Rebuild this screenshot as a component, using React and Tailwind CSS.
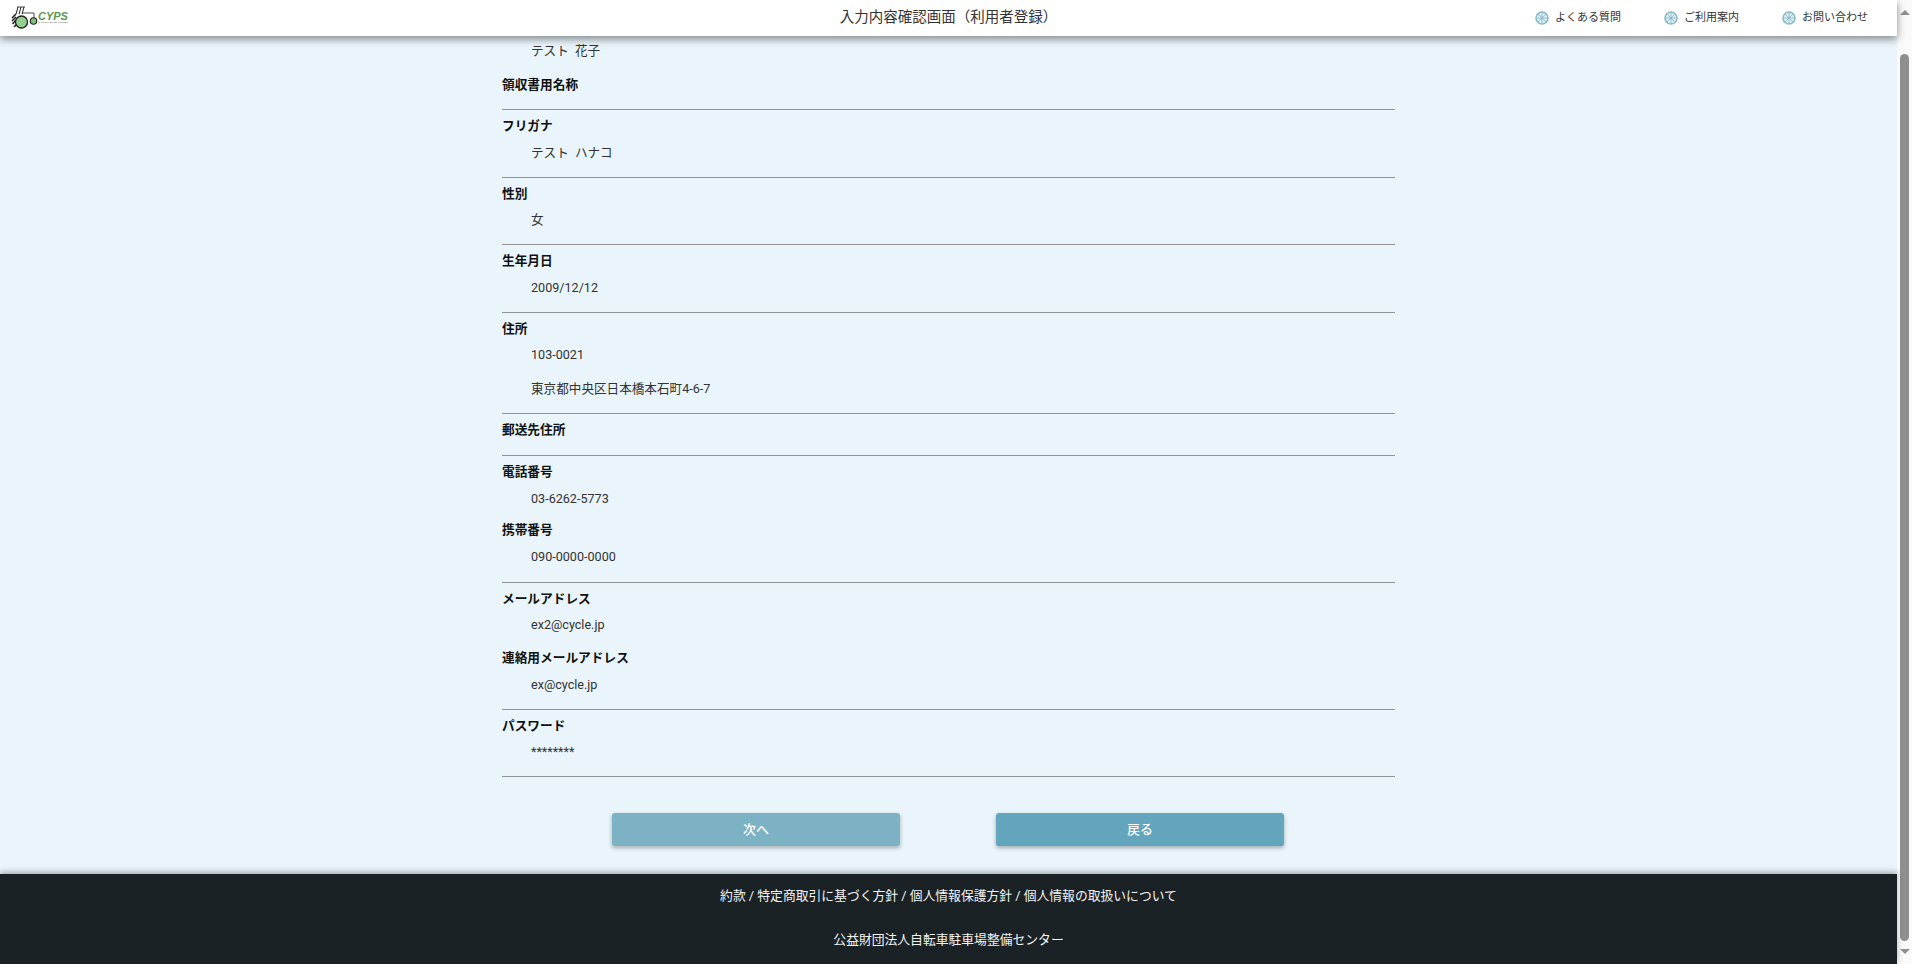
import React from "react";

const font = "font-['Roboto','Noto_Sans_CJK_JP',sans-serif]";

const navItems = ["よくある質問", "ご利用案内", "お問い合わせ"];

// 車輪アイコン
const WheelIcon = () => (
  <svg width="14" height="14" viewBox="0 0 14 14" fill="none" stroke="#86bac7">
    <circle cx="7" cy="7" r="6" fill="#dcecf0" strokeWidth="1.5" />
    <path d="M7 1.5V12.5M1.5 7H12.5M3.1 3.1L10.9 10.9M10.9 3.1L3.1 10.9" strokeWidth="0.8" />
    <circle cx="7" cy="7" r="1" fill="#86bac7" stroke="none" />
  </svg>
);

const Logo = () => (
  <div className="flex items-center">
    <svg width="27" height="24" viewBox="0 0 27 24" fill="none" stroke="#222">
      <path d="M7 1L5 8M10 1L8 8M13 1L11 8" strokeWidth="1" />
      <path d="M6 1H14M11 7H23V12" strokeWidth="0.8" />
      <path d="M5 8L1 12M5 11L1 15M5 14L1.5 18M6 18L3 21" strokeWidth="1.6" />
      <circle cx="10.5" cy="16" r="6" fill="#93cf8e" strokeWidth="1.3" />
      <circle cx="22.5" cy="15" r="3.2" fill="#82bf7d" strokeWidth="1.1" />
    </svg>
    <div className="flex flex-col items-start">
      <span className="font-['Liberation_Sans',sans-serif] text-[11px] leading-[10px] font-bold italic text-[#5b9650]">CYPS</span>
      <span className="font-['Liberation_Sans',sans-serif] text-[2.4px] leading-[4px] text-[#555]">CYCLE PARKING SYSTEM</span>
    </div>
  </div>
);

const Row = ({ label, values = [], border = true, pb = "pb-[12.1px]" }) => (
  <div className={`pt-[5px] ${pb} ${border ? "border-b border-[#939393]" : ""}`}>
    <div className="h-[21px] text-[12.7px] leading-[21px] font-bold text-[#111]">{label}</div>
    {values.length > 0 && (
      <div className="mt-[4.5px] flex flex-col gap-[10px]">
        {values.map((v) => (
          <div key={v} className="h-6 pl-[29px] text-[12.6px] leading-6 text-[#333] [word-spacing:3px]">{v}</div>
        ))}
      </div>
    )}
  </div>
);

export default function App() {
  return (
    <div className={`${font} flex h-screen overflow-hidden bg-white`}>
      <div className="flex min-w-0 flex-1 flex-col">
        <header className="relative z-10 flex h-9 shrink-0 items-center bg-white shadow-[0_3px_8px_rgba(0,0,0,0.45)]">
          <div className="w-[510px] pl-[11px]">
            <Logo />
          </div>
          <div className="flex-1 text-center text-[14.5px] text-[#333]">入力内容確認画面（利用者登録）</div>
          <nav className="flex w-[510px] justify-end gap-[43px] pr-[29px] text-[11px] text-[#333]">
            {navItems.map((item) => (
              <div key={item} className="flex items-center gap-[6px]">
                <WheelIcon />
                <span>{item}</span>
              </div>
            ))}
          </nav>
        </header>

        <main className="flex min-h-0 flex-1 flex-col items-center overflow-hidden bg-[#e9f5fa]">
          <div className="w-[893px] shrink-0">
            <div className="mt-[3px] mb-[5.5px] h-6 pl-[29px] text-[12.6px] leading-6 text-[#333] [word-spacing:3px]">テスト 花子</div>
            <Row label="領収書用名称" pb="pb-[14.5px]" />
            <Row label="フリガナ" values={["テスト ハナコ"]} />
            <Row label="性別" values={["女"]} />
            <Row label="生年月日" values={["2009/12/12"]} />
            <Row label="住所" values={["103-0021", "東京都中央区日本橋本石町4-6-7"]} />
            <Row label="郵送先住所" pb="pb-[15px]" />
            <Row label="電話番号" values={["03-6262-5773"]} border={false} pb="pb-[3.5px]" />
            <Row label="携帯番号" values={["090-0000-0000"]} pb="pb-[13px]" />
            <Row label="メールアドレス" values={["ex2@cycle.jp"]} border={false} pb="pb-[5px]" />
            <Row label="連絡用メールアドレス" values={["ex@cycle.jp"]} />
            <Row label="パスワード" values={["********"]} pb="pb-[11.6px]" />
            <div className="mt-9 flex justify-center gap-24 pr-[1px]">
              <button className="h-[33px] w-72 rounded-[3px] bg-[#7db2c5] text-[13px] font-medium text-white shadow-[0_2px_4px_rgba(0,0,0,0.3)]">次へ</button>
              <button className="h-[33px] w-72 rounded-[3px] bg-[#62a5bc] text-[13px] font-medium text-white shadow-[0_2px_4px_rgba(0,0,0,0.3)]">戻る</button>
            </div>
          </div>
        </main>

        <footer className="relative z-10 flex h-[90px] shrink-0 flex-col items-center bg-[#1b2225] pt-[13px] text-[12.8px] text-[#f2f2f2] shadow-[0_-2px_6px_rgba(0,0,0,0.3)]">
          <div className="h-[18px] leading-[18px]">約款 / 特定商取引に基づく方針 / 個人情報保護方針 / 個人情報の取扱いについて</div>
          <div className="mt-[26px] h-[18px] leading-[18px]">公益財団法人自転車駐車場整備センター</div>
        </footer>
      </div>

      {/* スクロールバー */}
      <div className="flex w-[15px] shrink-0 flex-col items-center bg-[#fafafa]">
        <div className="mt-[10px] h-0 w-0 border-x-[5px] border-b-[5px] border-x-transparent border-b-[#8f8f8f]" />
        <div className="mt-[39px] h-[887px] w-[9px] rounded-full bg-[#8f8f8f]" />
        <div className="mt-2 h-0 w-0 border-x-[5px] border-t-[5px] border-x-transparent border-t-[#8f8f8f]" />
      </div>
    </div>
  );
}
